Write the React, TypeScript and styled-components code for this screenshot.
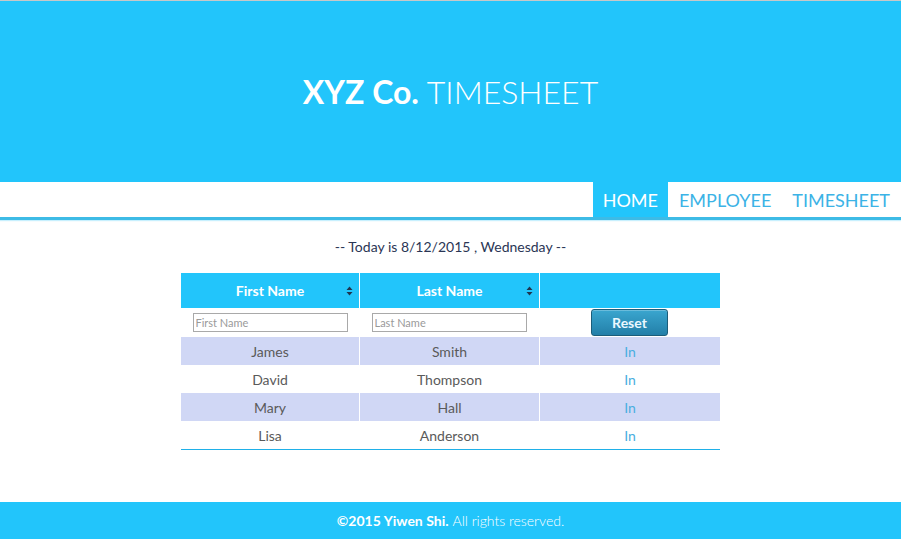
import React from 'react';
import styled, { createGlobalStyle } from 'styled-components';

const colors = {
  brand: '#22c5fb',
  navText: '#3cb3e6',
  rowAlt: '#d0d7f5',
  text: '#5a5a5a',
  link: '#4aaee0',
  rule: '#3dbbe6',
  tableRule: '#1fb0e8',
};

const GlobalStyle = createGlobalStyle`
  html, body {
    margin: 0;
    padding: 0;
  }
  body {
    font-family: Lato, "Open Sans", sans-serif;
    background: #fff;
  }
`;

const employees = [
  { first: 'James', last: 'Smith' },
  { first: 'David', last: 'Thompson' },
  { first: 'Mary', last: 'Hall' },
  { first: 'Lisa', last: 'Anderson' },
];

const SortIcon = () => (
  <svg width="7" height="10" viewBox="0 0 7 10">
    <path d="M3.5 0.5 L6.5 4 L0.5 4 Z M3.5 9.5 L6.5 6 L0.5 6 Z" fill="#1f3550" />
  </svg>
);

const App: React.FC = () => (
  <Page>
    <GlobalStyle />
    <Header>
      <Title>
        <strong>XYZ Co.</strong> <span>TIMESHEET</span>
      </Title>
    </Header>
    <Nav>
      <NavLink active>HOME</NavLink>
      <NavLink>EMPLOYEE</NavLink>
      <NavLink>TIMESHEET</NavLink>
    </Nav>
    <Main>
      <DateLine>-- Today is 8/12/2015 , Wednesday --</DateLine>
      <Table>
        <colgroup>
          <col style={{ width: 178 }} />
          <col style={{ width: 180 }} />
          <col />
        </colgroup>
        <thead>
          <tr>
            <HeadCell>
              First Name
              <SortSpot>
                <SortIcon />
              </SortSpot>
            </HeadCell>
            <HeadCell>
              Last Name
              <SortSpot>
                <SortIcon />
              </SortSpot>
            </HeadCell>
            <HeadCell />
          </tr>
        </thead>
        <tbody>
          <FilterRow>
            <td>
              <FilterInput placeholder="First Name" />
            </td>
            <td>
              <FilterInput placeholder="Last Name" />
            </td>
            <td>
              <ResetButton>Reset</ResetButton>
            </td>
          </FilterRow>
          {employees.map((e, i) => (
            <DataRow key={e.first} striped={i % 2 === 0}>
              <td>{e.first}</td>
              <td>{e.last}</td>
              <td>
                <InLink>In</InLink>
              </td>
            </DataRow>
          ))}
        </tbody>
      </Table>
    </Main>
    <Footer>
      <strong>©2015 Yiwen Shi.</strong> All rights reserved.
    </Footer>
  </Page>
);

const Page = styled.div`
  min-height: 100vh;
  display: flex;
  flex-direction: column;
  border-top: 1px solid #c8c8c8;
  box-sizing: border-box;
`;

const Header = styled.header`
  background: ${colors.brand};
  height: 181px;
  display: flex;
  align-items: center;
  justify-content: center;
`;

const Title = styled.h1`
  margin: 0;
  font-size: 32px;
  color: #fff;
  strong {
    font-weight: 700;
  }
  span {
    font-weight: 300;
  }
`;

const Nav = styled.nav`
  display: flex;
  justify-content: flex-end;
  height: 35px;
  border-bottom: 3px solid ${colors.rule};
  box-shadow: 0 1px 1px rgba(34, 197, 251, 0.25);
`;

const NavLink = styled.a<{ active?: boolean }>`
  display: flex;
  align-items: center;
  padding: 0 10px;
  margin-left: 1px;
  font-size: 18px;
  color: ${(p) => (p.active ? '#fff' : colors.navText)};
  background: ${(p) => (p.active ? colors.brand : 'transparent')};
  cursor: pointer;
  &:last-child {
    padding-right: 11px;
  }
`;

const Main = styled.main`
  display: flex;
  flex-direction: column;
  align-items: center;
  padding-top: 18px;
`;

const DateLine = styled.p`
  margin: 0 0 18px;
  font-size: 14px;
  line-height: 17px;
  color: #2a3655;
`;

const Table = styled.table`
  width: 539px;
  table-layout: fixed;
  border-collapse: separate;
  border-spacing: 0;
  border-bottom: 1px solid ${colors.tableRule};
  font-size: 14px;
  td {
    text-align: center;
    padding: 0;
  }
`;

const HeadCell = styled.th`
  position: relative;
  height: 35px;
  padding: 0;
  background: ${colors.brand};
  color: #fff;
  font-weight: 700;
  font-size: 14px;
  border-left: 1px solid #fff;
  &:first-child {
    border-left: none;
  }
`;

const SortSpot = styled.span`
  position: absolute;
  right: 6px;
  top: 13px;
  line-height: 0;
`;

const FilterRow = styled.tr`
  height: 29px;
`;

const FilterInput = styled.input`
  width: 155px;
  height: 19px;
  box-sizing: border-box;
  border: 1px solid #a9a9a9;
  font-family: Lato, sans-serif;
  font-size: 11px;
  padding: 1px 2px;
  display: block;
  margin: 0 auto;
  &::placeholder {
    color: #9a9a9a;
  }
`;

const ResetButton = styled.button`
  width: 77px;
  height: 27px;
  border: 1px solid #1c5d7a;
  border-radius: 3px;
  background: linear-gradient(#3aa6cf, #237fa8);
  color: #eaf8ff;
  font-family: Lato, sans-serif;
  font-weight: 700;
  font-size: 14px;
  box-shadow: inset 0 1px 0 rgba(255, 255, 255, 0.25);
  display: block;
  margin: 0 auto;
`;

const DataRow = styled.tr<{ striped: boolean }>`
  height: 28px;
  background: ${(p) => (p.striped ? colors.rowAlt : '#fff')};
  color: ${colors.text};
  td + td {
    border-left: 1px solid #fff;
  }
`;

const InLink = styled.a`
  color: ${colors.link};
  cursor: pointer;
`;

const Footer = styled.footer`
  margin-top: auto;
  background: ${colors.brand};
  height: 37px;
  display: flex;
  align-items: center;
  justify-content: center;
  color: #fff;
  font-size: 14px;
  font-weight: 300;
  strong {
    font-weight: 700;
    margin-right: 4px;
  }
`;

export default App;
